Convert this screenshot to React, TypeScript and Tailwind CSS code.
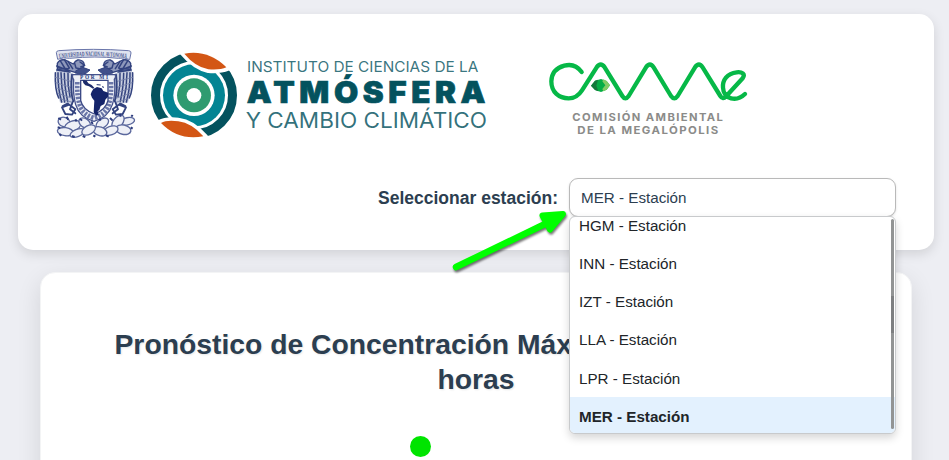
const stations = ["HGM", "INN", "IZT", "LLA", "LPR", "MER"];

function Eagle() {
  return (
    <g fill="none" stroke="#33437f" strokeLinecap="round" strokeLinejoin="round">
      <path d="M48 92q-2 50 12 96l38 4 2-90-24-16z" fill="#c9cfe0" stroke="none" />
      <path d="M52 70q8-14 24-10l24 12q12-20 28-8 10 10-2 22l-18 12-20-6-36-4z" strokeWidth="4" fill="#8e98bb" />
      <path d="M62 64l12 20M74 60l14 24M84 64l14 22M50 78l36 14M50 90l40 6M120 66l14 10-12 5M104 70l4 14 12 2M56 84l30 2" strokeWidth="4.5" />
      <path d="M46 98q-2 50 10 76M54 98q-1 46 11 88M63 98q0 44 11 88M73 100q0 38 10 84M84 100q-2 34 6 70" strokeWidth="4.5" />
      <path d="M46 112l46 12M48 128l44 14M50 144l44 14M54 160l40 14M60 176l34 10" strokeWidth="2.500" stroke="#7782aa" />
      <path d="M96 104q-6 50 4 80M84 190l-16 8M98 186l-8 22 16 12M66 202l22-8 18 14-10 16-20-2z" strokeWidth="5.500" />
      <path d="M108 92l20-10 22 8-12 10-28 4z" fill="#41508a" strokeWidth="3" />
    </g>
  );
}

function UniversityCrest() {
  return (
    <svg className="h-[110px] w-[110px] shrink-0" viewBox="0 0 330 330">
      <path d="M53 58l-4-20q0-5 7-6 52-4 104-4t106 4q8 1 7 7l-4 20q-14-8-34-4-68-8-146 0-20-4-36 3z" fill="#dfe3ef" stroke="#6a76aa" strokeWidth="3" />
      <defs>
        <path id="motto" d="M58 55q102-14 206 0" />
      </defs>
      <text fill="#44528c" fontFamily="Liberation Serif, serif" fontSize="20" fontWeight="700">
        <textPath href="#motto" textLength="202" lengthAdjust="spacingAndGlyphs">UNIVERSIDAD NACIONAL AVTONOMA</textPath>
      </text>
      <Eagle />
      <g transform="translate(324 0) scale(-1 1)">
        <Eagle />
      </g>
      <path d="M98 104h128q3 9-3 14 5 44-6 76-12 38-55 50-44-12-55-50-9-30-6-75-6-6-3-15z" fill="#eef0f7" stroke="#46538d" strokeWidth="4" />
      <path d="M112 126q-2 42 8 72 10 26 42 36M213 126q2 42-8 72-10 26-43 36" fill="none" stroke="#6a76a8" strokeWidth="14" strokeDasharray="7 4" />
      <path d="M122 121h82v60q-6 28-41 41-35-13-41-41z" fill="#fff" stroke="#3c4a86" strokeWidth="4" />
      <text x="120" y="117" fill="#2c3b7d" fontFamily="Liberation Serif, serif" fontSize="16" fontWeight="700" textLength="84">POR MI</text>
      <path d="M128 120l12 2 5 8 10 5 8 8-4 3-12-7-11-3-6-7z" fill="#1d2c6c" />
      <path d="M170 134l12 1M186 140l6 2" stroke="#1d2c6c" strokeWidth="3" />
      <path d="M160 147l11-6 14 4 5 8 15 5-1 12-8 9-3 13-11 6-4 12-5 4 3 11-8 2-7-10 1-18 1-17-7-9-4-10 3-8z" fill="#15246a" />
      <g fill="#eef0f7" stroke="#5a679c" strokeWidth="4">
        <ellipse cx="72" cy="246" rx="18" ry="14" transform="rotate(18 72 246)" />
        <ellipse cx="98" cy="258" rx="25" ry="15" transform="rotate(-20 98 258)" />
        <ellipse cx="76" cy="275" rx="24" ry="12" transform="rotate(8 76 275)" />
        <ellipse cx="112" cy="279" rx="23" ry="11" transform="rotate(-22 112 279)" />
        <ellipse cx="134" cy="249" rx="19" ry="13" transform="rotate(34 134 249)" />
        <ellipse cx="187" cy="250" rx="21" ry="13" transform="rotate(-35 187 250)" />
        <ellipse cx="262" cy="244" rx="22" ry="11" transform="rotate(-12 262 244)" />
        <ellipse cx="234" cy="246" rx="24" ry="14" transform="rotate(-52 234 246)" />
        <ellipse cx="250" cy="269" rx="23" ry="14" transform="rotate(12 250 269)" />
        <ellipse cx="212" cy="272" rx="23" ry="13" transform="rotate(-20 212 272)" />
        <ellipse cx="180" cy="274" rx="21" ry="13" transform="rotate(18 180 274)" />
        <ellipse cx="146" cy="270" rx="22" ry="13" transform="rotate(-28 146 270)" />
      </g>
      <path d="M55 234l8 5M80 230l5 9M53 262l8 2M106 238l4 6M120 236l6 6M154 244l4 8M178 236l4 6M210 234l8 8M240 222l2 8M274 230l4-5M160 286l6 4M128 288l8 3M198 286l8 4M272 262l6 4M96 288l8 3M58 282l6 5" stroke="#2d3c7e" strokeWidth="6" />
    </svg>
  );
}

function AtmosphereLogo() {
  return (
    <svg className="-ml-[5px] h-[110px] w-[355px] shrink-0" viewBox="0 0 1065 330">
      <circle cx="147" cy="166" r="115.5" fill="none" stroke="#04525e" strokeWidth="27" />
      <circle cx="147" cy="166" r="93" fill="#038493" />
      <circle cx="147" cy="166" r="62" fill="#fff" />
      <circle cx="147" cy="166" r="51" fill="#2f9b70" />
      <circle cx="147" cy="166" r="22" fill="#fff" />
      <path d="M113 38Q190 26 249 83Q225 93 190 90Q150 82 113 38z" fill="#d35615" stroke="#fff" strokeWidth="18" strokeLinejoin="round" />
      <path d="M118 41Q190 28 244 82Q225 91 190 88Q150 80 118 41z" fill="#d35615" />
      <path d="M43 249Q65 237 100 242Q142 247 180 291Q100 307 43 249z" fill="#d35615" stroke="#fff" strokeWidth="18" strokeLinejoin="round" />
      <path d="M48 249Q65 239 100 244Q140 249 175 289Q100 303 48 249z" fill="#d35615" />
      <g fontFamily="Inter, Lato, sans-serif" fill="#04525e">
        <text x="306" y="95" fontSize="45" fontWeight="400" textLength="694" lengthAdjust="spacingAndGlyphs" fillOpacity=".8">INSTITUTO DE CIENCIAS DE LA</text>
        <text x="305" y="189" fontSize="89" fontWeight="900" letterSpacing="13" stroke="#04525e" strokeWidth="2" textLength="730" lengthAdjust="spacingAndGlyphs">ATMÓSFERA</text>
        <text x="302" y="265" fontSize="63" fontWeight="400" textLength="724" lengthAdjust="spacingAndGlyphs" fillOpacity=".82">Y CAMBIO CLIMÁTICO</text>
      </g>
    </svg>
  );
}

function CameLogo() {
  return (
    <svg className="ml-10 mt-[10px] h-[100px] w-[220px] shrink-0" viewBox="0 0 660 300">
      <path
        d="M125 66C111 47 91 42 73 47C46 54 35 72 34 94C34 127 57 145 86 145C105 145 117 135 126 121L170 52Q182 35 194 52L247 138Q256 152 266 138L318 52Q330 35 341 52L393 138Q403 152 413 138L465 52Q477 35 488 52L541 138Q549 150 557 140L608 85C617 72 606 65 590 67C561 70 547 91 549 113C551 149 590 156 615 132"
        fill="none" stroke="#06b847" strokeWidth="13" strokeLinecap="round" strokeLinejoin="round"
      />
      <path d="M153 107l12-15 18-5 17 6 10 13-10 13-17 7-18-6z" fill="#05ad45" />
      <path d="M153 107l12-15 9-3-5 18 6 17-10-4z" fill="#14783b" />
      <path d="M190 88l10 5 10 13-10 13-10 5-3-7 9-11-9-12z" fill="#83cb65" />
      <g fill="#8b8b89" fontFamily="Inter, sans-serif" fontWeight="700" fontSize="32" letterSpacing="4">
        <text x="97" y="214" textLength="456" lengthAdjust="spacingAndGlyphs">COMISIÓN AMBIENTAL</text>
        <text x="112" y="252" textLength="427" lengthAdjust="spacingAndGlyphs">DE LA MEGALÓPOLIS</text>
      </g>
    </svg>
  );
}

function StationPicker() {
  return (
    <div className="flex items-center justify-end gap-[11px] pr-[38px]">
      <label className="pt-[2px] text-[17.5px] font-bold text-[#2c3e50]">Seleccionar estación:</label>
      <div className="relative h-[39px] w-[327px]">
        <div className="flex h-full items-center rounded-[9px] border border-[#b9b9b9] bg-white px-[11px] pt-[2px] text-[15.2px] text-[#2c3e50] shadow-sm">
          MER - Estación
        </div>
        <div className="absolute left-0 top-[38px] z-10 flex h-[218px] w-full flex-col justify-end overflow-hidden rounded-[6px] border border-[#c8cacc] bg-white text-[15.2px] text-[#212529] shadow-[0_4px_8px_rgba(0,0,0,0.16)]">
          {stations.map((code) => (
            <div
              key={code}
              className={
                code === "MER"
                  ? "flex h-[36px] shrink-0 items-center bg-[#e3f1fe] px-[9px] pt-[5px] font-bold"
                  : "flex h-[38.2px] shrink-0 items-center px-[9px] pt-[2px]"
              }
            >
              {code} - Estación
            </div>
          ))}
          <div className="absolute right-[1px] top-[2px] flex h-[210px] w-[3px] flex-col rounded-full bg-[#929494] pt-[77px]">
            <div className="h-[37px] w-full bg-[#7d7f80]" />
          </div>
        </div>
      </div>
    </div>
  );
}

function PointerArrow() {
  return (
    <svg className="pointer-events-none absolute left-[445px] top-[202px] z-20 h-[76px] w-[128px]" viewBox="445 202 128 76">
      <g className="drop-shadow-[1px_2px_1px_rgba(0,0,0,0.55)]" fill="#00ff00" stroke="#00ff00" strokeLinecap="round" strokeLinejoin="round">
        <path d="M456 267L547 223" strokeWidth="6.500" />
        <path d="M542.5 215.500L563 214L550 229.500z" strokeWidth="6" />
      </g>
    </svg>
  );
}

export default function App() {
  return (
    <main className="relative h-[460px] w-full overflow-hidden bg-[#edeef3] px-[18px] pt-[14px] font-['Liberation_Sans',Arial,sans-serif]">
      <header className="relative z-10 h-[236px] w-[916px] rounded-[15px] bg-white shadow-[0_4px_12px_rgba(0,0,0,0.12)]">
        <div className="flex h-[164px] items-start pl-[22px] pt-[26px]">
          <UniversityCrest />
          <AtmosphereLogo />
          <CameLogo />
        </div>
        <StationPicker />
      </header>
      <section className="ml-[22px] mt-[22px] flex h-[300px] w-[872px] flex-col rounded-[15px] border border-[#f3f4f5] bg-white pt-[54px] shadow-[0_8px_24px_rgba(0,0,0,0.11)]">
        <h1 className="text-[28.3px] font-bold leading-[34.5px] text-[#2c3e50] [text-shadow:1px_1px_2px_rgba(0,0,0,0.1)]">
          <span className="block pl-[73.500px]">Pronóstico de Concentración Máx</span>
          <span className="block text-center">horas</span>
        </h1>
        <div className="ml-[369px] mt-[40px] h-[21px] w-[21px] rounded-full bg-[#00e400]" />
      </section>
      <PointerArrow />
    </main>
  );
}
